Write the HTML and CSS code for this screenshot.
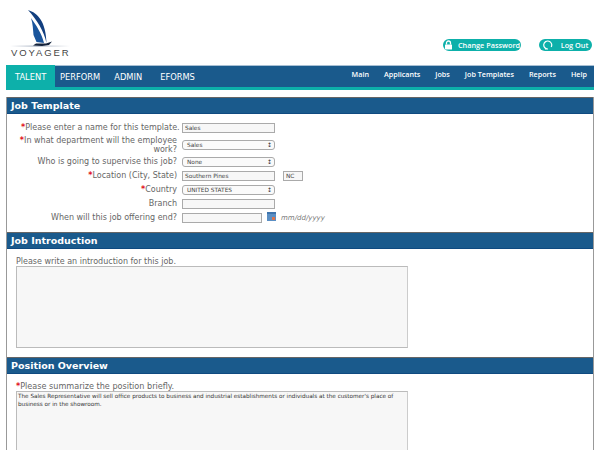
FILE: index.html
```html
<!DOCTYPE html>
<html lang="en">
<head>
<meta charset="utf-8">
<title>Job Template</title>
<link rel="stylesheet" href="styles.css">
</head>
<body>
<header class="top">
  <div class="logo">
    <svg class="logo-mark" width="62" height="40" viewBox="9 8 62 40">
      <defs><linearGradient id="horizon" x1="0" x2="1" y1="0" y2="0"><stop offset="0" stop-color="#fff"/><stop offset=".45" stop-color="#a8b2c2"/><stop offset="1" stop-color="#fff"/></linearGradient></defs>
      <rect x="10" y="45.500" width="60" height="1.200" fill="url(#horizon)"/>
      <path d="M28 10 C38 13 46 22 46.500 43 C44 31 37 20 28 10Z" fill="#123f7f"/>
      <path d="M31 18 C33 24 33 30 33.500 35 L36.500 42 L44 43 C41.500 33 36 25 31 18Z" fill="#1a559c"/>
      <path d="M33 45.500 L36 43.500 L46 43.500 L52 41.500 L49 45 L42 46Z" fill="#14233c"/>
    </svg>
    <span class="logo-text">VOYAGER</span>
  </div>
  <div class="top-actions">
    <a class="pill pill-pass">
      <svg width="9" height="10" viewBox="0 0 9 10"><path d="M2.500 4.500V3a2 2 0 0 1 4 0v1.500" fill="none" stroke="#fff" stroke-width="1.300"/><rect x="1" y="4.500" width="7" height="5" rx=".6" fill="#fff"/></svg>
      <span>Change Password</span></a>
    <a class="pill pill-out">
      <svg width="10" height="10" viewBox="0 0 10 10"><path d="M8.200 7A4 4 0 1 0 5 9H2" fill="none" stroke="#fff" stroke-width="1.200"/></svg>
      <span>Log Out</span></a>
  </div>
</header>

<nav class="nav">
  <ul class="nav-main">
    <li class="active">TALENT</li>
    <li>PERFORM</li>
    <li>ADMIN</li>
    <li>EFORMS</li>
  </ul>
  <ul class="nav-sub">
    <li>Main</li>
    <li>Applicants</li>
    <li>Jobs</li>
    <li>Job Templates</li>
    <li>Reports</li>
    <li>Help</li>
  </ul>
</nav>

<main class="panel">
  <h2 class="section-title">Job Template</h2>
  <form class="form-grid">
    <label class="lbl"><span class="req">*</span>Please enter a name for this template.</label>
    <div class="field"><input class="txt txt-wide" value="Sales"></div>
    <label class="lbl lbl-two"><span class="req">*</span>In what department will the employee work?</label>
    <div class="field"><span class="sel">Sales</span></div>
    <label class="lbl">Who is going to supervise this job?</label>
    <div class="field"><span class="sel">None</span></div>
    <label class="lbl"><span class="req">*</span>Location (City, State)</label>
    <div class="field"><input class="txt txt-wide" value="Southern Pines"><input class="txt txt-state" value="NC"></div>
    <label class="lbl"><span class="req">*</span>Country</label>
    <div class="field"><span class="sel">UNITED STATES</span></div>
    <label class="lbl">Branch</label>
    <div class="field"><input class="txt txt-wide"></div>
    <label class="lbl">When will this job offering end?</label>
    <div class="field"><input class="txt txt-date">
      <svg class="cal" width="9" height="9" viewBox="0 0 9 9"><rect width="9" height="9" fill="#5b8fc4"/><rect y="0" width="9" height="2" fill="#3f74ad"/><rect x="5" y="5" width="3" height="3" fill="#d9734f"/></svg>
      <em class="hint">mm/dd/yyyy</em></div>
  </form>

  <h2 class="section-title">Job Introduction</h2>
  <div class="block block-intro">
    <div class="prompt">Please write an introduction for this job.</div>
    <textarea class="area area-intro"></textarea>
  </div>

  <h2 class="section-title">Position Overview</h2>
  <div class="block block-over">
    <div class="prompt"><span class="req">*</span>Please summarize the position briefly.</div>
    <textarea class="area area-over">The Sales Representative will sell office products to business and industrial establishments or individuals at the customer's place of business or in the showroom.</textarea>
  </div>
</main>
</body>
</html>
```
FILE: styles.css
```css
* { box-sizing: border-box; }
html, body { margin: 0; height: 450px; overflow: hidden; background: #fff; }
body { font-family: "DejaVu Sans", Verdana, sans-serif; color: #666; padding: 0 6px; }
.top { height: 65px; display: flex; justify-content: space-between; align-items: flex-start; }
.logo { position: relative; width: 68px; height: 50px; margin-top: 8px; }
.logo-mark { display: block; margin-left: 3px; }
.logo-text { position: absolute; left: 5px; top: 39px; font: 9.500px "Liberation Sans", Arial, sans-serif; letter-spacing: 1.900px; color: #444; white-space: nowrap; }
.top-actions { display: flex; gap: 18px; margin-top: 39px; margin-right: 2px; }
.pill { height: 12px; display: flex; align-items: center; justify-content: center; gap: 5px; border-radius: 6px; background: #0db0aa; color: #fff; font: 600 7.300px "Open Sans", sans-serif; white-space: nowrap; }
.pill-pass { width: 78px; }
.pill-out { width: 53px; gap: 8px; }
.nav { height: 25px; display: flex; justify-content: space-between; background: #1a5a8c; border-bottom: 3px solid #0db0aa; border-top: 1px solid #a8c0d4; color: #fff; }
.nav ul { list-style: none; margin: 0; padding: 0; display: flex; }
.nav-main { font-size: 8.300px; }
.nav-main li { line-height: 22px; margin-right: 14px; }
.nav-main li.active { background: #0db0aa; width: 49px; padding-left: 9px; margin: -1px 5px -3px 0; height: 25px; line-height: 24px; }
.nav-main li:nth-child(3) { margin-right: 18px; }
.nav-sub { font: 600 7.200px "Open Sans", sans-serif; padding-right: 7px !important; gap: 15px; line-height: 17px; }
.panel { margin-top: 7px; height: 360px; border-left: 1px solid #999; border-right: 1px solid #999; }
.section-title { margin: 0; height: 17px; background: #1a5a8c; border-top: 1px solid #666; border-bottom: 1px solid #0f4a80; color: #fff; font-size: 9.500px; line-height: 15px; font-weight: bold; padding-left: 4px; }
.form-grid { height: 118px; display: grid; grid-template-columns: 170px 1fr; column-gap: 5px; row-gap: 4px; padding: 9px 0 0 0; align-content: start; }
.lbl { font-size: 8px; line-height: 10px; height: 10px; text-align: right; padding-left: 14px; align-self: center; white-space: nowrap; }
.lbl-two { white-space: normal; height: 19px; line-height: 9.500px; margin: -1.500px 0; padding-left: 0; }
.req { color: #e01020; font-weight: bold; }
.field { display: flex; align-items: center; min-height: 10px; }
.txt { height: 10px; border: 1px solid #aaa; background: #f7f7f7; padding: 0 2px; font: 5.800px "DejaVu Sans", sans-serif; color: #444; outline: 0; }
.txt-wide { width: 93px; }
.txt-state { width: 20px; margin-left: 8px; }
.txt-date { width: 80px; }
.sel { width: 93px; height: 10px; border: 1px solid #aaa; border-radius: 3px; background: #fafafa; padding-left: 4px; font-size: 5.800px; line-height: 8px; color: #444; position: relative; }
.sel::after { content: "\2195"; position: absolute; right: 2px; top: 0; font-size: 6px; color: #333; }
.cal { margin-left: 5px; margin-top: -3px; }
.hint { margin-left: 5px; font-size: 7px; color: #777; }
.block { padding: 0 0 0 9px; }
.block-intro { height: 108px; padding-top: 8px; }
.block-over { padding-top: 8px; }
.prompt { font-size: 8px; line-height: 9px; }
.block-over .prompt { font-size: 8.100px; }
.area { display: block; width: 392px; border: 1px solid #bbb; border-right-color: #ccc; background: #f7f7f7; resize: none; padding: 1px; font: 5.700px/7.500px "DejaVu Sans", sans-serif; color: #333; outline: 0; }
.area-intro { height: 82px; }
.area-over { height: 80px; }
```
